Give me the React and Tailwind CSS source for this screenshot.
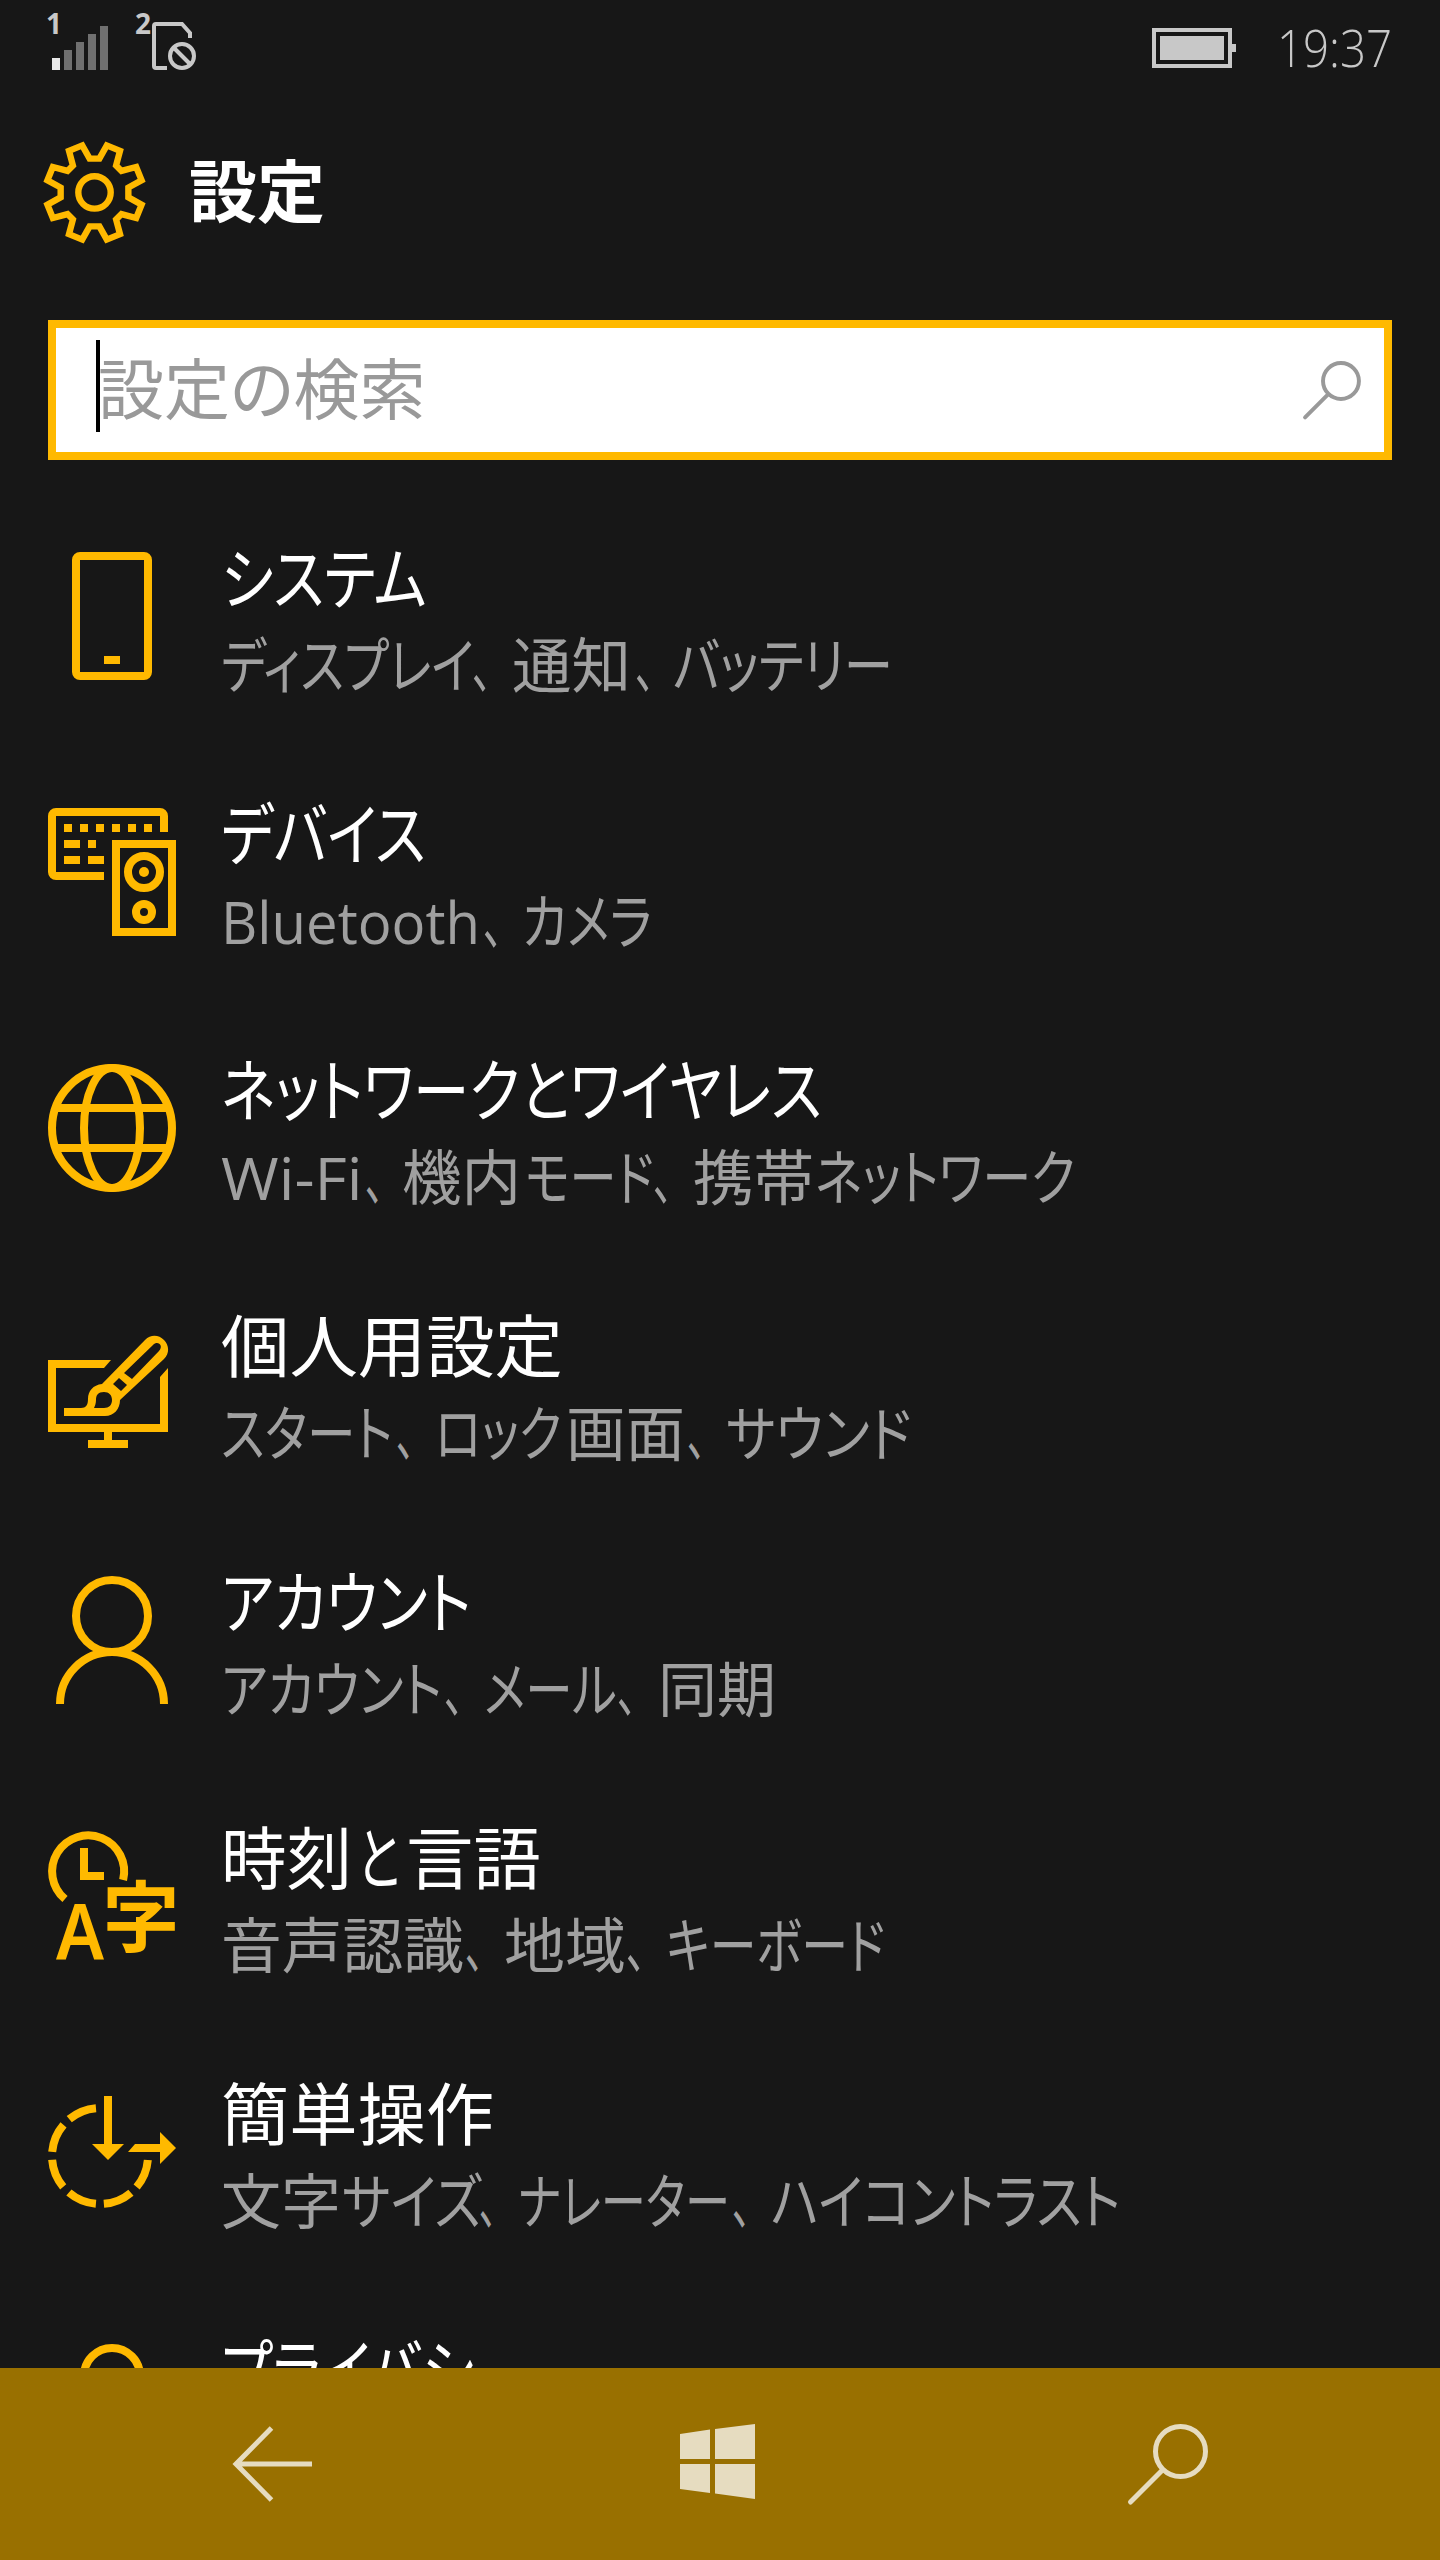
import React, { useLayoutEffect, useRef, useState } from 'react';

const PhoneIcon = () => (
    <svg viewBox="0 0 128 128" className="w-32 h-32 fill-none stroke-[#ffb900] stroke-8">
        <rect x="28" y="4" width="72" height="120" rx="4" />
        <path d="M56 108h16" />
    </svg>
);

const DevicesIcon = () => (
    <svg viewBox="0 0 128 128" className="w-32 h-32 fill-none stroke-[#ffb900] stroke-8">
        <path d="M56 68H8a4 4 0 0 1-4-4V8a4 4 0 0 1 4-4h104a4 4 0 0 1 4 4v16" />
        <path d="M16 20h8m8 0h8m8 0h8m8 0h8m8 0h8m8 0h8M16 36h16m8 0h8M16 52h16m8 0h16" />
        <rect x="68" y="36" width="56" height="88" />
        <circle cx="96" cy="64" r="16" />
        <circle cx="96" cy="64" r="5" className="fill-[#ffb900] stroke-none" />
        <circle cx="96" cy="104" r="8" />
    </svg>
);

const GlobeIcon = () => (
    <svg viewBox="0 0 128 128" className="w-32 h-32 fill-none stroke-[#ffb900] stroke-8">
        <circle cx="64" cy="64" r="60" />
        <ellipse cx="64" cy="64" rx="28" ry="60" />
        <path d="M10 44h108M10 84h108" />
    </svg>
);

const PersonalizeIcon = () => (
    <svg viewBox="0 0 128 128" className="w-32 h-32 fill-[#ffb900]">
        <path d="M0 40h63l-7 8H8v56h104V57l8-9v64H64v8h16v8H40v-8h16v-8H0z" />
        <path
            fillRule="evenodd"
            d="M16 88h17c5 0 7-3 7-9 0-8 5-14 14-15L97 20c6-6 14-5 19 0s6 13 0 19L72 80c0 9-6 16-15 16H16zM76 53l8 6 27-28c5-5-1-11-6-6zM65 64l8 7 6-6-8-7zM46 88h10c5 0 8-3 8-8s-3-8-8-8c-6 0-8 3-8 8 0 3-1 6-2 8z"
        />
    </svg>
);

const AccountIcon = () => (
    <svg viewBox="0 0 128 128" className="w-32 h-32 fill-none stroke-[#ffb900] stroke-8">
        <circle cx="64" cy="40" r="36" />
        <path d="M12 128a52 52 0 0 1 104 0" />
    </svg>
);

const TimeIcon = () => (
    <svg viewBox="0 0 128 128" className="w-32 h-32 overflow-visible fill-[#ffb900]">
        <path d="M17 67A36 36 0 1 1 75.1 48M36 16v28h20" className="fill-none stroke-[#ffb900] stroke-8" />
        <text x="8" y="128" textLength="48" lengthAdjust="spacingAndGlyphs" className="font-['Noto_Sans'] font-semibold text-[78px]">A</text>
        <text x="54.5" y="114" className="font-['Noto_Sans_CJK_JP'] font-bold text-[77px]">字</text>
    </svg>
);

const EaseIcon = () => (
    <svg viewBox="0 0 128 128" className="w-32 h-32 fill-[#ffb900]">
        <path
            d="M99.83 72.02A48 48 0 1 1 47.98 20.17"
            strokeDasharray="29.66 8.04"
            className="fill-none stroke-[#ffb900] stroke-8"
        />
        <path d="M56 8h8v48h12L60 72 44 56h12zM80 64l7-8h25V44l16 16-16 16V64z" />
    </svg>
);

const PrivacyIcon = () => (
    <svg viewBox="0 0 128 128" className="w-32 h-32 fill-none stroke-[#ffb900] stroke-8">
        <circle cx="64" cy="32" r="28" />
    </svg>
);

const SearchIcon = ({ className }) => (
    <svg viewBox="0 0 78 78" className={className}>
        <circle cx="51.5" cy="26.5" r="25" />
        <path d="M33.5 45L1.5 77" strokeLinecap="round" />
    </svg>
);

const GearIcon = () => (
    <svg viewBox="-0.5 -1.5 106 106" className="w-[104px] h-[104px] fill-none stroke-[#ffb900] stroke-[6.5]">
        <circle cx="52" cy="52" r="16.5" />
        <path d="M47 17.5h10L64.5 4 78 9.5 74 24.5l5.5 5.5L94.5 26 100 39.5 86.5 47v10L100 64.5 94.5 78 79.5 74 74 79.5 78 94.5 64.5 100 57 86.5H47L39.5 100 26 94.5 30 79.5 24.5 74 9.5 78 4 64.5 17.5 57V47L4 39.5 9.5 26 24.5 30 30 24.5 26 9.5 39.5 4z" />
    </svg>
);

// Each run is [text, left, right]: where its glyphs start and end on the line.
const items = [
    {
        icon: PhoneIcon,
        title: [['システム', 224, 425]],
        detail: [['ディスプレイ', 224, 472], ['、', 475, 490], ['通知', 515, 629], ['、', 638, 653], ['バッテリー', 676, 891]],
    },
    {
        icon: DevicesIcon,
        title: [['デバイス', 224, 424]],
        detail: [['Bluetooth', 223, 477, true], ['、', 485, 500], ['カメラ', 524, 649]],
    },
    {
        icon: GlobeIcon,
        title: [['ネットワークとワイヤレス', 224, 820]],
        detail: [['Wi-Fi', 224, 360, true], ['、', 368, 382], ['機内', 405, 519], ['モード', 528, 652], ['、', 656, 671], ['携帯', 696, 812], ['ネットワーク', 818, 1073]],
    },
    {
        icon: PersonalizeIcon,
        title: [['個人用設定', 224, 561]],
        detail: [['スタート', 224, 391], ['、', 399, 413], ['ロック', 438, 560], ['画面', 569, 683], ['、', 690, 704], ['サウンド', 729, 909]],
    },
    {
        icon: AccountIcon,
        title: [['アカウント', 224, 469]],
        detail: [['アカウント', 224, 440], ['、', 447, 462], ['メール', 487, 615], ['、', 620, 635], ['同期', 661, 774]],
    },
    {
        icon: TimeIcon,
        title: [['時刻', 223, 349], ['と', 359, 397], ['言語', 408, 538]],
        detail: [['音声認識', 224, 462], ['、', 468, 482], ['地域', 507, 624], ['、', 629, 644], ['キーボード', 669, 883]],
    },
    {
        icon: EaseIcon,
        title: [['簡単操作', 224, 492]],
        detail: [['文字', 224, 339], ['サイズ', 345, 480], ['、', 482, 495], ['ナレーター', 521, 728], ['、', 735, 749], ['ハイコントラスト', 774, 1119]],
    },
    {
        icon: PrivacyIcon,
        title: [['プライバシ', 224, 472]],
        detail: [],
    },
];

const FitText = ({ width, className = '', children }) => {
    const ref = useRef(null);
    const [scale, setScale] = useState(1);

    useLayoutEffect(() => {
        const measure = () => setScale(width / ref.current.offsetWidth);
        measure();
        document.fonts.ready.then(measure);
    }, [width]);

    return (
        <span ref={ref} className={`inline-block origin-left ${className}`} style={{ transform: `scaleX(${scale})` }}>
            {children}
        </span>
    );
};

const Line = ({ runs, className }) => (
    <div className={`flex whitespace-nowrap ${className}`}>
        {runs.map(([text, left, right, latin], i) => {
            const next = runs[i + 1];
            return (
                <span key={i} className="block shrink-0" style={{ width: (next ? next[1] : right + 5) - left }}>
                    <FitText width={right - left + 5} className={latin ? "font-['Open_Sans'] font-normal text-[58px]" : ''}>
                        {text}
                    </FitText>
                </span>
            );
        })}
    </div>
);

const SettingsRow = ({ item }) => {
    const Icon = item.icon;
    return (
        <div className="flex h-64 shrink-0 items-start gap-[45px]">
            <Icon />
            <div className="-mt-[19px]">
                <Line runs={item.title} className="text-[68px] leading-[84px] text-white" />
                <Line runs={item.detail} className="mt-[3px] text-[60px] leading-[84px] text-[#a0a0a0]" />
            </div>
        </div>
    );
};

const StatusBar = () => (
    <div className="flex h-[88px] shrink-0 items-start justify-between pl-12 pr-[47px] text-[#c8c8c8]">
        <svg viewBox="0 0 160 88" className="w-40 h-[88px] overflow-visible fill-none stroke-[#c8c8c8] stroke-4">
            <g className="fill-[#c8c8c8] stroke-none font-['Open_Sans'] font-bold text-[28px]">
                <text x="-2" y="34" textLength="14">1</text>
                <text x="87" y="34" textLength="14">2</text>
            </g>
            <path d="M4 58h8v12H4z" className="fill-[#e8e8e8] stroke-none" />
            <path d="M16 50h8v20h-8zM28 42h8v28h-8zM40 34h8v36h-8zM52 26h8v44h-8z" className="fill-[#707070] stroke-none" />
            <path d="M142 38v-5l-8-9h-26a2 2 0 0 0-2 2v40a2 2 0 0 0 2 2h11" />
            <circle cx="134" cy="56" r="12" />
            <path d="M125.5 47.5l17 17" />
        </svg>
        <div className="flex items-start">
            <div className="mt-7 flex items-center">
                <div className="h-10 w-20 border-4 border-[#c8c8c8] p-1">
                    <div className="h-full w-full bg-[#c8c8c8]" />
                </div>
                <div className="h-2 w-1 bg-[#c8c8c8]" />
            </div>
            <div className="ml-[41px] mt-[11px] w-[116px] whitespace-nowrap font-['Open_Sans'] font-light text-[52px] leading-[72px]">
                <FitText width={115}>19:37</FitText>
            </div>
        </div>
    </div>
);

const NavBar = () => (
    <div className="flex h-48 shrink-0 items-start bg-[#997000] pl-[232px]">
        <svg viewBox="0 0 80 78" className="mt-[57px] w-20 h-[78px] fill-none stroke-[#e6dcc0] stroke-5">
            <path d="M80 39H5M39.5 3L4 39l35.5 36" />
        </svg>
        <svg viewBox="0 0 75 75" className="ml-[368px] mt-14 w-[75px] h-[75px] fill-[#e6dcc0]">
            <path d="M0 10l30-4.5V35H0zM35 5l40-5v35H35zM0 40h30v29L0 65zM35 40h40v35l-40-5.5z" />
        </svg>
        <SearchIcon className="ml-[374px] mt-[57px] w-[78px] h-[78px] overflow-visible fill-none stroke-[#e6dcc0] stroke-5" />
    </div>
);

const App = () => {
    return (
        <div
            lang="ja"
            className="flex h-[2560px] w-[1440px] flex-col overflow-hidden bg-[#171717] font-['Noto_Sans_CJK_JP',sans-serif] [font-feature-settings:'palt']"
        >
            <StatusBar />
            <div className="flex h-[232px] shrink-0 items-start pl-[43px] pt-[52px]">
                <GearIcon />
                <h1 className="ml-[42px] -mt-[2px] text-[68px] leading-[100px] font-bold text-white">設定</h1>
            </div>
            <div className="mx-12 flex h-[140px] shrink-0 items-center border-8 border-[#ffb900] bg-white pl-10 pr-6">
                <div className="-mt-2 h-[92px] w-1 bg-black" />
                <div className="-mt-[11px] -ml-[2px] flex-1 text-[66px] leading-[100px] text-[#999999]">設定の検索</div>
                <SearchIcon className="w-14 h-14 overflow-visible fill-none stroke-[#999999] stroke-[5.5]" />
            </div>
            <div className="flex min-h-0 flex-1 flex-col overflow-hidden pl-12 pt-[92px]">
                {items.map((item, i) => (
                    <SettingsRow key={i} item={item} />
                ))}
            </div>
            <NavBar />
        </div>
    );
};

export default App;
